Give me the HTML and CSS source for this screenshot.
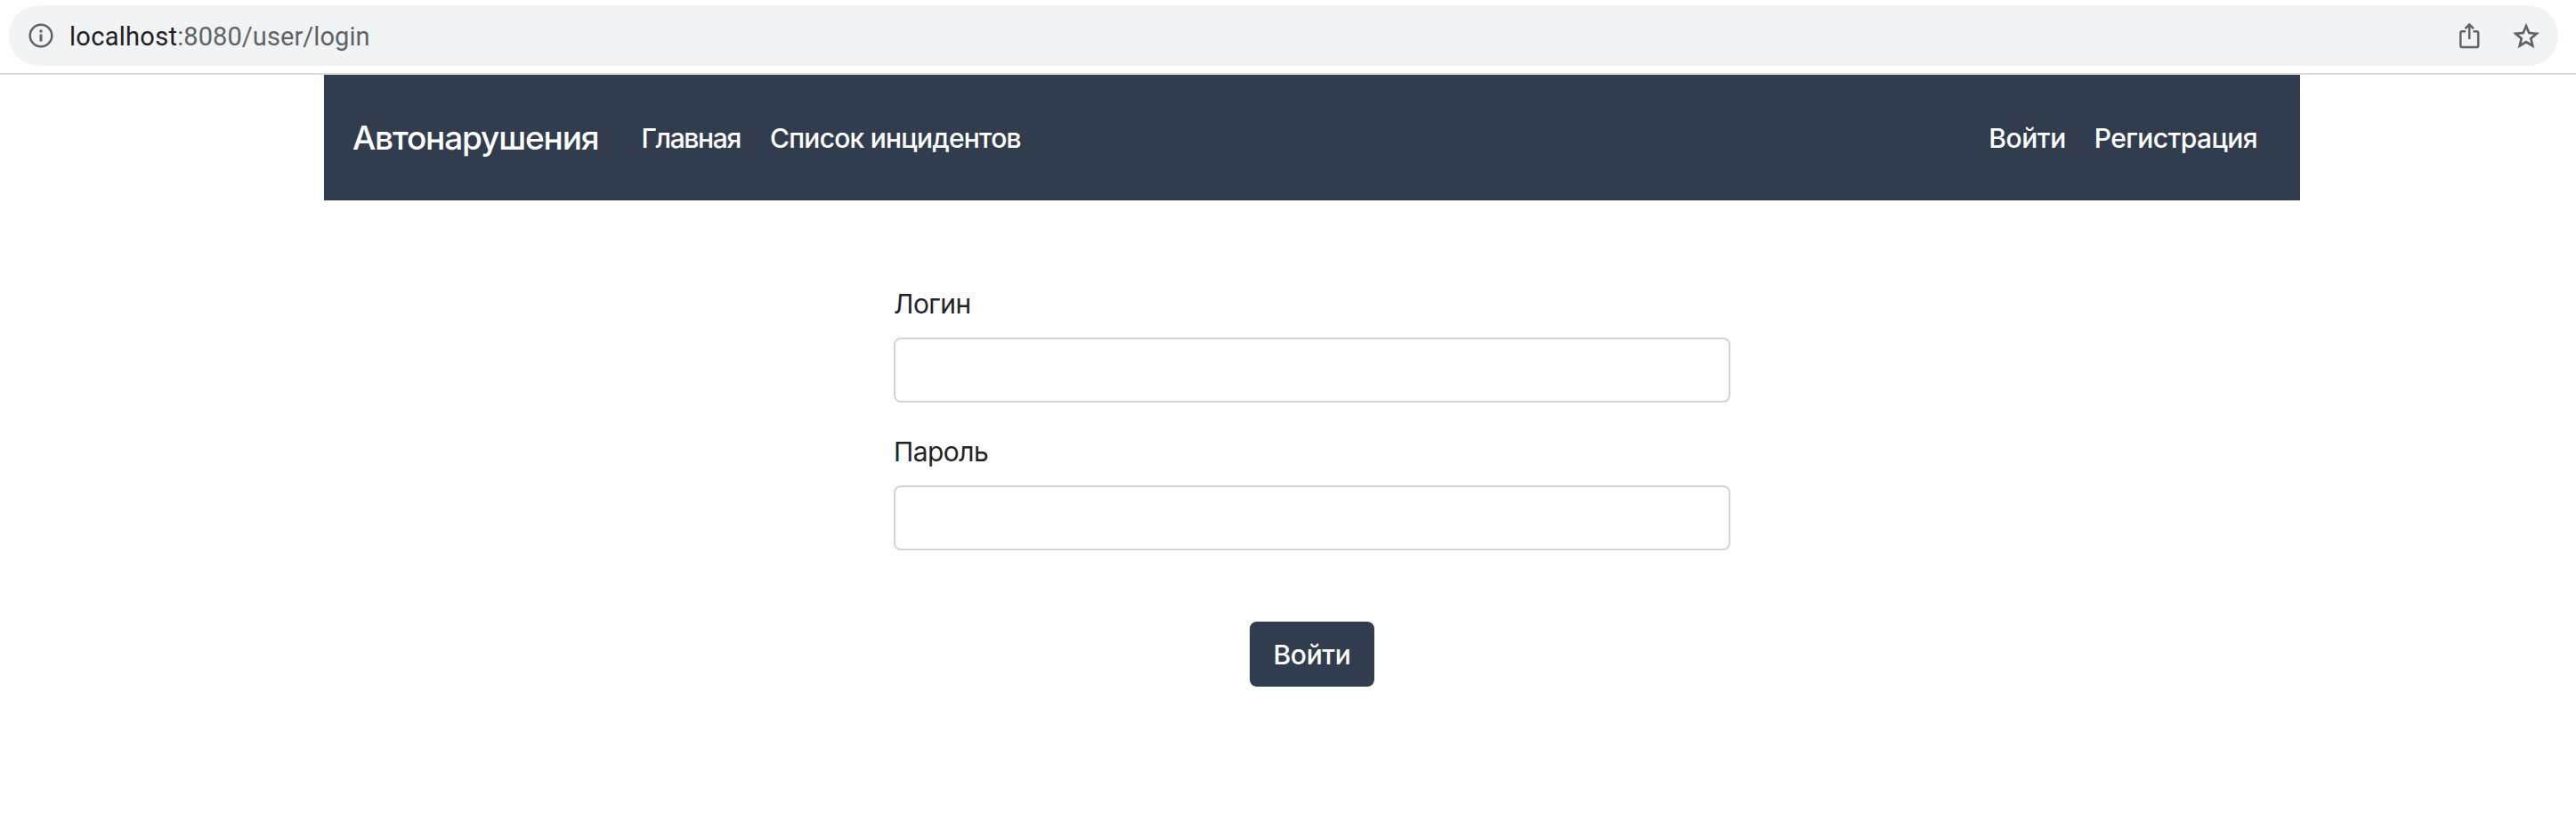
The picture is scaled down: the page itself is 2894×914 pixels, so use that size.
FILE: index.html
```html
<!DOCTYPE html>
<html lang="ru">
<head>
<meta charset="utf-8">
<title>Вход</title>
<link rel="stylesheet" href="styles.css">
</head>
<body>
<header class="toolbar">
  <div class="address">
    <svg class="icon" width="28" height="28" viewBox="0 0 28 28"><circle cx="14" cy="14" r="12.3" fill="none" stroke="#5f6368" stroke-width="2.5"/><path d="M12.5 7.5h3v3h-3zM12.5 12.5h3v8h-3z" fill="#5f6368"/></svg>
    <span class="url"><span class="host">localhost</span><span class="path">:8080/user/login</span></span>
    <svg class="icon share" width="24" height="30" viewBox="0 0 24 30" fill="none" stroke="#5f6368" stroke-width="2.5"><path d="M8 10.3H4Q2.3 10.3 2.3 12V26Q2.3 28 4 28H20.5Q22.2 28 22.2 26V12Q22.2 10.3 20.5 10.3H16.5M12.2 19V3M7.5 7.2l4.7-4.7 4.7 4.7"/></svg>
    <svg class="icon star" width="30" height="30" viewBox="0 0 30 30"><path fill="#5f6368" fill-rule="evenodd" d="M30 11.7 19.2 10.8 15 .8 10.8 10.8 0 11.7 8.2 18.8 5.7 29.3 15 23.7 24.3 29.3 21.8 18.8ZM15 20.5 9.8 23.6 11.2 17.7 6.6 13.8 12.6 13.2 15 7.6 17.4 13.2 23.4 13.8 18.8 17.7 20.2 23.6Z"/></svg>
  </div>
</header>
<nav class="navbar">
  <a class="brand">Автонарушения</a>
  <a class="link home">Главная</a>
  <a class="link list">Список инцидентов</a>
  <a class="link enter">Войти</a>
  <a class="link register">Регистрация</a>
</nav>
<main>
  <form class="form">
    <label class="label" for="login">Логин</label>
    <input class="field" id="login" type="text">
    <label class="label" for="password">Пароль</label>
    <input class="field" id="password" type="password">
    <button class="submit" type="button">Войти</button>
  </form>
</main>
</body>
</html>
```
FILE: styles.css
```css
* { box-sizing: border-box; }
body { margin: 0; background: #fff; color: #212529; font-family: Inter, "Liberation Sans", sans-serif; font-size: 30px; line-height: 44px; }
.toolbar { height: 84px; padding: 6px 20px 8px 10px; border-bottom: 2px solid #dadbdc; }
.address { display: flex; align-items: center; height: 68px; padding: 0 21px 0 22px; border-radius: 34px; background: #f1f3f4; }
.icon { display: block; flex: none; }
.url { margin-left: 18px; padding-top: 1px; font-family: Roboto, sans-serif; font-size: 29px; line-height: 40px; letter-spacing: 0.3px; white-space: nowrap; }
.host { color: #202124; }
.path { color: #5f6368; letter-spacing: 0.07px; }
.share { margin-left: auto; }
.star { margin-left: 37px; }
.navbar { display: flex; align-items: center; width: 2220px; height: 141px; margin-left: 364px; padding: 0 48px 0 32px; background: #313d4e; color: #fff; font-weight: 450; white-space: nowrap; }
.brand { font-size: 37px; letter-spacing: -1.15px; }
.home { margin-left: 48px; letter-spacing: -1.35px; }
.list { margin-left: 33px; letter-spacing: -0.75px; }
.enter { margin-left: auto; letter-spacing: -0.4px; }
.register { margin-left: 32px; letter-spacing: -0.6px; }
.form { display: flex; flex-direction: column; width: 940px; margin: 94px 0 0 1004px; }
.label { height: 44px; margin-bottom: 16px; letter-spacing: -0.55px; }
.field { width: 100%; height: 73px; margin: 0 0 33px; padding: 11px 22px; border: 2px solid #ced4da; border-radius: 8px; background: #fff; font: inherit; }
.submit { align-self: center; width: 140px; height: 73px; margin-top: 47px; padding: 0; border: 0; border-radius: 8px; background: #313d4e; color: #fff; font: inherit; font-weight: 450; letter-spacing: -0.35px; }
```
